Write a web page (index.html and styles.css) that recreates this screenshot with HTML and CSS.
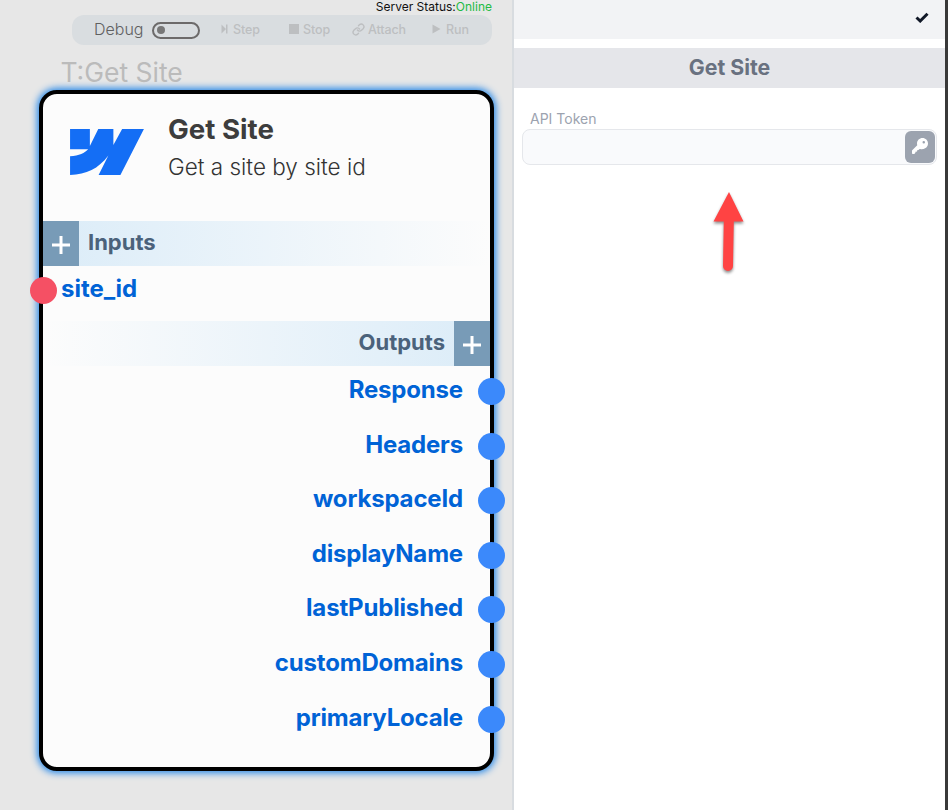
FILE: index.html
```html
<!DOCTYPE html>
<html lang="en">
<head>
<meta charset="utf-8">
<title>Get Site</title>
<link rel="stylesheet" href="styles.css">
</head>
<body>
<div class="app">
  <main class="canvas">
    <div class="status">Server Status:<span class="online">Online</span></div>
    <div class="toolbar">
      <span class="debug">Debug</span>
      <span class="toggle"></span>
      <span class="tool step"><svg width="8" height="10" viewBox="0 0 8 10"><path d="M0.500 0.500 5 5 0.500 9.500ZM5 0.500H6.500V9.500H5Z"/></svg>Step</span>
      <span class="tool stop"><svg width="10" height="10" viewBox="0 0 10 10"><path d="M0 0H10V10H0Z"/></svg>Stop</span>
      <span class="tool attach"><svg width="13" height="13" viewBox="0 0 24 24"><g fill="none" stroke="#bdbfc1" stroke-width="2.600" stroke-linecap="round"><path d="M10 13a5 5 0 0 0 7.500.5l3.500-3.500a5 5 0 0 0-7-7l-2 2"/><path d="M14 11a5 5 0 0 0-7.500-.5L3 14a5 5 0 0 0 7 7l2-2"/></g></svg>Attach</span>
      <span class="tool run"><svg width="9" height="10" viewBox="0 0 9 10"><path d="M0.500 0.500 8.500 5 0.500 9.500Z"/></svg>Run</span>
    </div>
    <div class="type-label">T:Get Site</div>
    <section class="node">
      <header class="node-head">
        <svg class="logo" width="74" height="46" viewBox="121 149 220 137"><path fill="#146ef5" d="M121 149H180V200L205 149H250V197L276 149H341L271 286H206L235 228C205 268 170 284 121 286V230C148 228 165 220 175 209H121Z"/></svg>
        <div>
          <h1>Get Site</h1>
          <p>Get a site by site id</p>
        </div>
      </header>
      <div class="bar inputs"><span class="plus"><svg width="18" height="18" viewBox="0 0 18 18"><path d="M0 9H18M9 0V18"/></svg></span><span class="bar-title">Inputs</span></div>
      <div class="port in"><i class="dot"></i><span>site_id</span></div>
      <div class="bar outputs"><span class="bar-title">Outputs</span><span class="plus"><svg width="18" height="18" viewBox="0 0 18 18"><path d="M0 9H18M9 0V18"/></svg></span></div>
      <div class="ports">
        <div class="port out"><span>Response</span><i class="dot"></i></div>
        <div class="port out"><span>Headers</span><i class="dot"></i></div>
        <div class="port out"><span>workspaceId</span><i class="dot"></i></div>
        <div class="port out"><span>displayName</span><i class="dot"></i></div>
        <div class="port out"><span>lastPublished</span><i class="dot"></i></div>
        <div class="port out"><span>customDomains</span><i class="dot"></i></div>
        <div class="port out"><span>primaryLocale</span><i class="dot"></i></div>
      </div>
    </section>
  </main>
  <aside class="panel">
    <div class="panel-top"><svg width="14" height="11" viewBox="0 0 14 11"><path d="M1.500 5.500 5.200 9 12.500 1.700" fill="none" stroke="#111827" stroke-width="3"/></svg></div>
    <h2>Get Site</h2>
    <label class="label">API Token</label>
    <div class="field">
      <button class="key"><svg width="16" height="16" viewBox="0 0 512 512"><path fill="#fff" d="M336 352c97.200 0 176-78.800 176-176S433.200 0 336 0S160 78.800 160 176c0 18.700 2.900 36.800 8.300 53.700L7 391c-4.500 4.500-7 10.600-7 17v80c0 13.300 10.700 24 24 24h50l35-40v-30h35l25-30v-30h38l36-33c16.900 5.400 75 8.300 93 10zM376 96a40 40 0 1 1 0 80a40 40 0 1 1 0-80z"/></svg></button>
    </div>
    <svg class="arrow" width="46" height="94" viewBox="0 0 46 94"><path d="M24 3 38.500 32.500H28.800L28 77A5 5 0 0 1 18 77L18.800 32.500H8.500Z"/></svg>
  </aside>
</div>
</body>
</html>
```

FILE: styles.css
```css
* { box-sizing: border-box; }
body { margin: 0; font-family: Inter, "Liberation Sans", sans-serif; background: #fff; }
h1, h2, p { margin: 0; }
.app { display: flex; width: 948px; height: 810px; overflow: hidden; }
.canvas { width: 514px; height: 810px; background: #e7e7e7; border-right: 2px solid #d8dce0; flex: none; }
.status { height: 15px; line-height: 14px; padding-right: 20px; text-align: right; font-size: 12px; color: #111; }
.online { color: #22bb44; }
.toolbar { display: flex; align-items: center; width: 420px; height: 30px; margin-left: 72px; padding-left: 22px; border-radius: 12px; background: #d9dde0; }
.debug { width: 58px; font-size: 16px; font-weight: 350; color: #606060; position: relative; top: -1px; }
.toggle { width: 48px; height: 17px; border: 2px solid #6c6a6a; border-radius: 9px; padding: 2.500px 3px; }
.toggle::before { content: ""; display: block; width: 8px; height: 8px; border-radius: 50%; background: #777; }
.tool { display: flex; align-items: center; font-size: 12.500px; font-weight: 500; letter-spacing: -.1px; line-height: 16px; color: #bdbfc1; }
.tool svg { fill: #bdbfc1; margin-right: 4px; position: relative; top: -1px; }
.step { width: 68px; margin-left: 21px; }
.stop { width: 63px; }
.attach { width: 80px; }
.attach svg { margin-right: 3px; }
.run svg { margin-right: 5px; }
.type-label { height: 45px; padding-left: 60.500px; line-height: 55px; font-size: 26.500px; color: #bbb; }
.node { width: 455px; height: 681px; margin-left: 39px; border: 4px solid #000; border-radius: 18px; background: #fcfcfc; box-shadow: 0 0 7px 2px #2788e8; }
.node-head { display: flex; height: 127px; padding: 0 0 0 27px; }
.logo { margin: 35px 24px 0 0; }
h1 { margin-top: 18px; font-size: 27.700px; line-height: 34px; font-weight: 700; color: #3d3d3d; }
p { margin-top: 4px; font-size: 22.500px; line-height: 34px; font-weight: 300; color: #333; }
.bar { display: flex; height: 45px; }
.inputs { background: linear-gradient(90deg, #dbecf8, #fcfcfc); }
.outputs { background: linear-gradient(270deg, #dbecf8, #fcfcfc); justify-content: flex-end; }
.bar-title { padding: 0 9px; font-size: 22px; line-height: 43px; font-weight: 700; color: #4b627b; }
.plus { display: flex; align-items: center; justify-content: center; width: 36px; height: 45px; background: #789bb7; }
.plus svg { position: relative; top: 1px; fill: none; stroke: #fff; stroke-width: 3; }
.port { display: flex; align-items: center; font-size: 24px; font-weight: 700; color: #0063d6; }
.port span { position: relative; top: -2px; }
.dot { flex: none; width: 27px; height: 27px; border-radius: 50%; background: #3b89fb; }
.in { height: 55px; padding-bottom: 5.500px; margin-left: -13px; }
.in .dot { background: #f55064; margin-right: 4px; }
.out { height: 54.600px; justify-content: flex-end; margin-right: -15px; letter-spacing: -.17px; }
.out .dot { margin-left: 15px; }
.ports { margin-top: -1.700px; }
.panel { width: 434px; border-right: 3px solid #393939; background: #fff; flex: none; }
.panel-top { display: flex; justify-content: flex-end; height: 39px; padding: 12px 16px 0 0; background: #f2f3f5; }
h2 { margin-top: 9px; height: 40px; background: #e5e6ea; color: #697180; font-size: 21.300px; line-height: 39px; font-weight: 700; text-align: center; }
.label { display: block; margin: 21px 0 0 16px; height: 20px; line-height: 20px; font-size: 14px; color: #9ca3af; }
.field { display: flex; justify-content: flex-end; width: 415px; height: 36px; margin-left: 8px; border: 1px solid #e5e7eb; border-radius: 8px; background: #f9fafc; padding: 1px; }
.key { width: 30px; height: 32px; padding: 0; border: 0; border-radius: 6px; background: #9ca3af; }
.arrow { display: block; margin: 24px 0 0 191px; fill: #ff4343; filter: drop-shadow(0 2px 1.500px rgba(0,0,0,.45)); }
```
